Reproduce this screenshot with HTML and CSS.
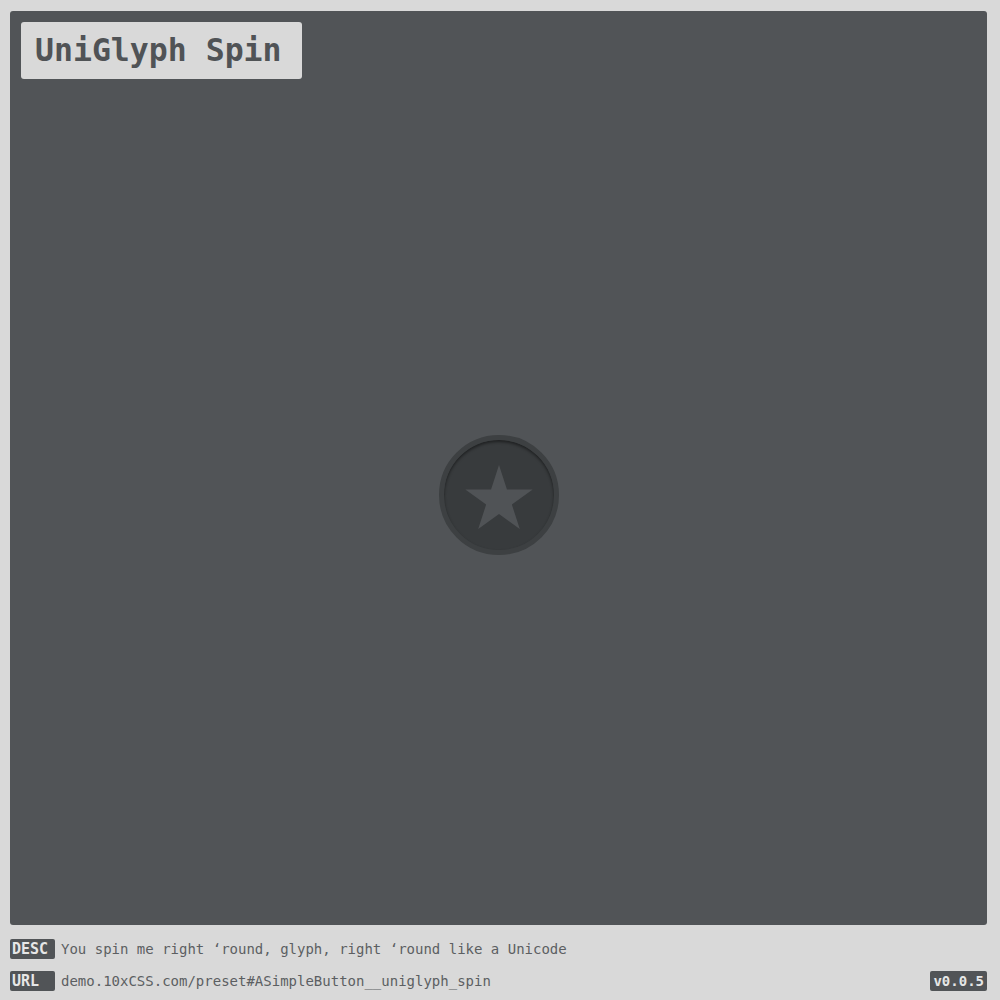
FILE: index.html
```html
<!DOCTYPE html>
<html>
<head>
<meta charset="utf-8">
<link rel="stylesheet" href="styles.css">
</head>
<body>
<main class="panel">
  <h1 class="title">UniGlyph Spin</h1>
  <div class="stage">
    <button class="spin-btn" aria-label="spin">
      <svg class="star" width="68" height="64" viewBox="-34 -35.4 68 64">
        <polygon fill="#505356" points="0,-35.4 7.95,-10.94 33.67,-10.94 12.86,4.18 20.81,28.64 0,13.52 -20.81,28.64 -12.86,4.18 -33.67,-10.94 -7.95,-10.94"/>
      </svg>
    </button>
  </div>
</main>
<footer class="meta">
  <div class="row"><span class="tag">DESC</span><span class="text">You spin me right ‘round, glyph, right ‘round like a Unicode</span></div>
  <div class="row"><span class="tag">URL</span><span class="text">demo.10xCSS.com/preset#ASimpleButton__uniglyph_spin</span><span class="ver">v0.0.5</span></div>
</footer>
</body>
</html>
```
FILE: styles.css
```css
html, body {
  margin: 0;
  padding: 0;
  background: #d9d9d9;
  font-family: "DejaVu Sans Mono", "Liberation Mono", monospace;
}
body {
  padding: 11px 13px 0 10px;
  width: 1000px;
  height: 1000px;
  box-sizing: border-box;
  display: flex;
  flex-direction: column;
}
.panel {
  height: 914px;
  background: #515457;
  border-radius: 3px;
  padding: 11px;
  box-sizing: border-box;
  display: flex;
  flex-direction: column;
  align-items: flex-start;
}
.title {
  margin: 0;
  background: #d9d9d9;
  color: #505356;
  font-size: 31.5px;
  font-weight: bold;
  height: 57px;
  line-height: 57px;
  padding: 0 20px 0 14px;
  border-radius: 3px;
}
.stage {
  flex: 1;
  align-self: stretch;
  display: flex;
  align-items: center;
  justify-content: center;
  padding-bottom: 3px;
}
.spin-btn {
  width: 120px;
  height: 120px;
  border-radius: 50%;
  border: 5px solid #3d4042;
  background: #383b3d;
  box-shadow: inset 0 2px 3px rgba(0,0,0,0.45);
  padding: 0;
  display: flex;
  align-items: center;
  justify-content: center;
  box-sizing: border-box;
}
.star {
  display: block;
  margin-top: 4px;
}
.meta {
  padding-top: 14px;
  display: flex;
  flex-direction: column;
  gap: 12px;
}
.row {
  display: flex;
  align-items: center;
  height: 20px;
}
.tag {
  width: 45px;
  height: 20px;
  box-sizing: border-box;
  background: #515457;
  color: #e6e6e6;
  font-weight: bold;
  font-size: 15px;
  line-height: 20px;
  padding-left: 2px;
  border-radius: 2px;
}
.text {
  margin-left: 6px;
  font-size: 14px;
  color: #5c5f62;
}
.ver {
  margin-left: auto;
  background: #515457;
  color: #e6e6e6;
  font-weight: bold;
  font-size: 14px;
  line-height: 20px;
  height: 20px;
  padding: 0 3px;
  border-radius: 2px;
}
```
